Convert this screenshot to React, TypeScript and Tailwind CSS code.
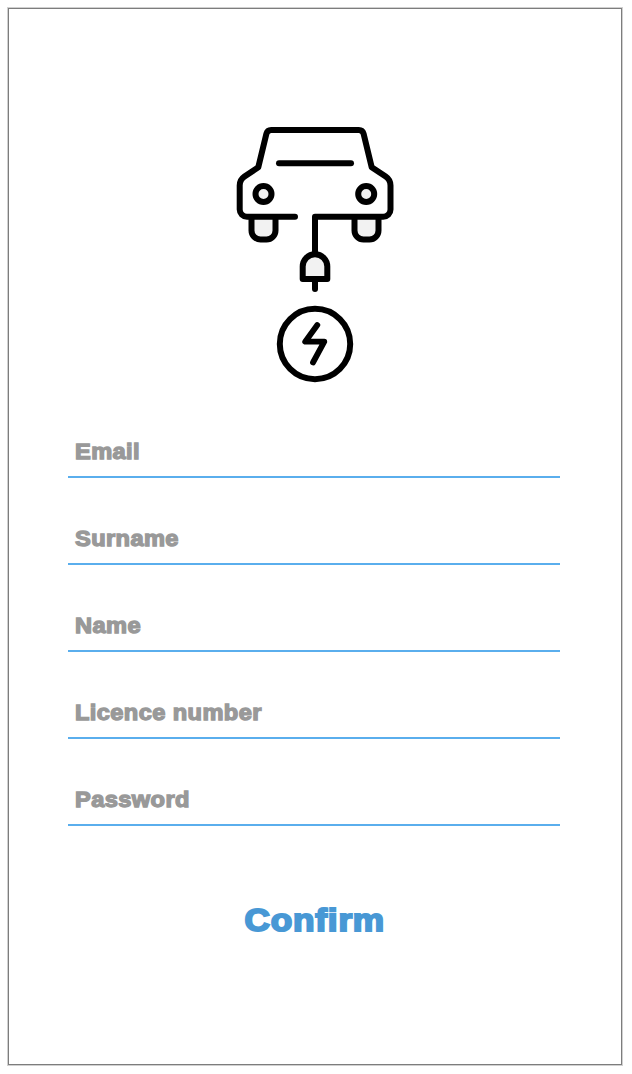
const FIELDS = ["Email", "Surname", "Name", "Licence number", "Password"];

function ChargingCar() {
  return (
    <svg
      className="ml-[226px] block h-[262px] w-[160px]"
      viewBox="235 124 160 262"
      fill="none"
      stroke="#000"
      strokeWidth="6"
      strokeLinecap="round"
      strokeLinejoin="round"
      aria-hidden="true"
    >
      <path d="M251.500 218v12.500a9 9 0 0 0 9 9h6a9 9 0 0 0 9-9v-12.500" fill="#f2f2f2" />
      <path d="M354.500 218v12.500a9 9 0 0 0 9 9h6a9 9 0 0 0 9-9v-12.500" fill="#f2f2f2" />
      <path
        d="M295 216.800H247a7.300 7.300 0 0 1-7.300-7.300V185.500a11 11 0 0 1 4.800-9L258.300 167.300L266.400 133.800a5 5 0 0 1 4.800-3.800h87.600a5 5 0 0 1 4.800 3.800L371.700 167.300L385.700 176.500a11 11 0 0 1 4.800 9V209.500a7.300 7.300 0 0 1-7.300 7.300H315V254"
        fill="none"
      />
      <path d="M279 163.300h72" />
      <circle cx="263.500" cy="194" r="8" fill="#f2f2f2" />
      <circle cx="366.200" cy="194" r="8" fill="#f2f2f2" />
      <path d="M302.700 279V266.500a12.300 12.300 0 0 1 24.600 0V279z" fill="#f2f2f2" />
      <path d="M315 281v8" />
      <circle cx="315" cy="344" r="35.200" />
      <path d="M317.300 325L305.200 341.700H324.300L313 362.500" strokeWidth="5.800" />
    </svg>
  );
}

export default function App() {
  return (
    <main className="h-[1074px] w-full overflow-hidden bg-white p-2 font-['Liberation_Sans',Arial,sans-serif] font-bold">
      <div className="h-[1057px] w-[614px] border border-[#7d7d7d] pt-[115px] shadow-[0_0_0_1px_#d0d0d0]">
        <ChargingCar />
        <form className="ml-[59px] mt-[6px] w-[492px]">
          {FIELDS.map((field) => (
            <label
              key={field}
              className="flex h-[87px] items-end border-b-2 border-[#5aaeed] pb-[10px] pl-[7px] text-[21.500px] leading-[28px] text-[#999999] first:h-[86px]"
            >
              <span className="origin-left scale-x-110 tracking-[0.350px] [-webkit-text-stroke:1.300px_#999999]">
                {field}
              </span>
            </label>
          ))}
        </form>
        <div className="flex justify-center pt-[72px]">
          <button
            type="button"
            className="origin-center scale-x-110 text-[32px] leading-[44px] tracking-[0.700px] text-[#4898d5] [-webkit-text-stroke:2px_#4898d5]"
          >
            Confirm
          </button>
        </div>
      </div>
    </main>
  );
}
